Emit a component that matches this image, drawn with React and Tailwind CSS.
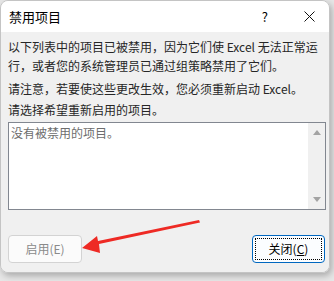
import React from 'react'

const font = { fontFamily: '"Noto Sans CJK SC", "Noto Sans", sans-serif' }

function Arrow() {
  return (
    <svg className="absolute left-0 top-0 pointer-events-none" width="334" height="281" viewBox="0 0 334 281">
      <polygon points="199,220 200,222.5 99,244 100,253 82,248 97,236 98,241" fill="#ee2a24" />
    </svg>
  )
}

export default function App() {
  return (
    <div className="relative w-[334px] h-[281px] bg-[#e6e6e6] overflow-hidden" style={font}>
      <div className="w-[330px] h-[273px] rounded-[8px] border border-[#c4c4c4] overflow-hidden flex flex-col shadow-[2px_3px_6px_rgba(0,0,0,0.25)]">
        {/* title bar */}
        <div className="h-[31px] bg-white flex items-center pl-[8px] text-[13px] text-black shrink-0">
          <span>禁用项目</span>
          <span className="ml-auto mr-[36px] text-[13px]">?</span>
          <svg width="11" height="11" viewBox="0 0 11 11" className="mr-[14px]">
            <path d="M0.5 0.5 L10.5 10.5 M10.5 0.5 L0.5 10.5" stroke="#111" strokeWidth="1" />
          </svg>
        </div>

        {/* body */}
        <div className="flex-1 bg-[#f0f0f0] pl-[7px] pr-[3px] pt-[5px] text-[12px] text-[#262626] flex flex-col">
          <p className="leading-[19px]">
            以下列表中的项目已被禁用，因为它们使 Excel 无法正常运<br />
            行，或者您的系统管理员已通过组策略禁用了它们。
          </p>
          <p className="leading-[19px] mt-[4px]">请注意，若要使这些更改生效，您必须重新启动 Excel。</p>
          <p className="leading-[19px] mt-[2px]">请选择希望重新启用的项目。</p>

          {/* list box */}
          <div className="mt-[3px] h-[88px] border border-[#828790] bg-white flex">
            <div className="flex-1 pl-[2px] pt-[2px] text-[#6d6d6d] leading-[16px]">没有被禁用的项目。</div>
            <div className="w-[17px] bg-[#f0f0f0] flex flex-col items-center justify-between py-[7px]">
              <svg width="8" height="5" viewBox="0 0 8 5"><path d="M0 5 L4 0 L8 5 Z" fill="#a3a3a3" /></svg>
              <svg width="8" height="5" viewBox="0 0 8 5"><path d="M0 0 L8 0 L4 5 Z" fill="#a3a3a3" /></svg>
            </div>
          </div>

          {/* buttons */}
          <div className="mt-[25px] flex items-center justify-between pr-[1px]">
            <button className="w-[74px] h-[28px] rounded-[4px] border border-[#d3d3d3] bg-[#fbfbfb] text-[12px] text-[#8a8a8a]">
              启用(E)
            </button>
            <button className="w-[73px] h-[28px] rounded-[4px] border border-[#0067c0] bg-[#fbfdff] p-[2px]">
              <span className="w-full h-full flex items-center justify-center border border-dotted border-black text-[12px] text-black">
                关闭(<span className="underline">C</span>)
              </span>
            </button>
          </div>
        </div>
      </div>
      <Arrow />
    </div>
  )
}
